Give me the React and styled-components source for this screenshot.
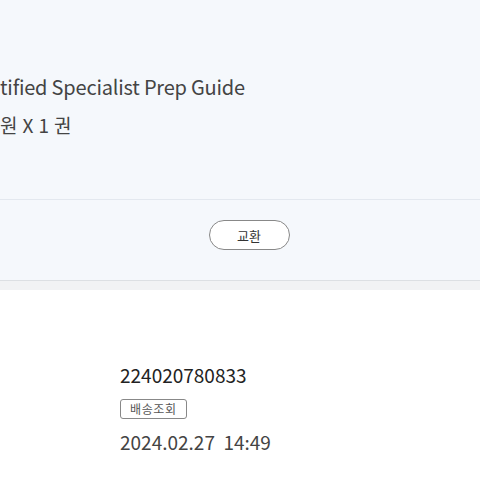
import styled, { createGlobalStyle } from "styled-components";

const GlobalStyle = createGlobalStyle`
  html, body {
    margin: 0;
    padding: 0;
    background: #ffffff;
    font-family: "Noto Sans CJK KR", "Noto Sans", sans-serif;
  }
`;

export default function App() {
  return (
    <>
      <GlobalStyle />
      <Page>
        <ProductInfo>
          <Title>tified Specialist Prep Guide</Title>
          <Quantity>원 X 1 권</Quantity>
        </ProductInfo>
        <ActionBar>
          <PillButton>교환</PillButton>
        </ActionBar>
        <Divider />
        <Delivery>
          <TrackingNo>224020780833</TrackingNo>
          <SmallButton>배송조회</SmallButton>
          <DateText>2024.02.27&nbsp;&nbsp;14:49</DateText>
        </Delivery>
      </Page>
    </>
  );
}

const Page = styled.div`
  width: 480px;
  height: 480px;
  overflow: hidden;
`;

const ProductInfo = styled.section`
  height: 200px;
  box-sizing: border-box;
  padding-top: 71px;
  background: #f5f8fc;
  border-bottom: 1px solid #e3e8ef;
`;

const Title = styled.div`
  font-size: 20px;
  line-height: 32px;
  color: #444;
  letter-spacing: -0.2px;
`;

const Quantity = styled.div`
  font-size: 19px;
  line-height: 28px;
  color: #444;
  margin-top: 8px;
  letter-spacing: 0.4px;
`;

const ActionBar = styled.div`
  height: 81px;
  box-sizing: border-box;
  background: #f5f8fc;
  border-bottom: 1px solid #dcdfe3;
  display: flex;
  justify-content: center;
  align-items: flex-start;
  padding: 20px 0 0 18px;
`;

const PillButton = styled.button`
  width: 81px;
  height: 30px;
  border: 1px solid #888;
  border-radius: 15px;
  background: #fff;
  font-family: inherit;
  font-size: 13px;
  color: #333;
  padding: 0;
`;

const Divider = styled.div`
  height: 9px;
  background: #f1f2f4;
`;

const Delivery = styled.section`
  padding: 72px 0 0 120px;
  display: flex;
  flex-direction: column;
  align-items: flex-start;
`;

const TrackingNo = styled.div`
  font-size: 19px;
  line-height: 26px;
  color: #222;
`;

const SmallButton = styled.button`
  margin-top: 11px;
  height: 20px;
  padding: 0 9px;
  border: 1px solid #888;
  border-radius: 3px;
  background: #fff;
  font-family: inherit;
  font-size: 12px;
  line-height: 18px;
  letter-spacing: 0.6px;
  color: #555;
`;

const DateText = styled.div`
  margin-top: 10px;
  font-size: 19px;
  line-height: 26px;
  color: #444;
`;
